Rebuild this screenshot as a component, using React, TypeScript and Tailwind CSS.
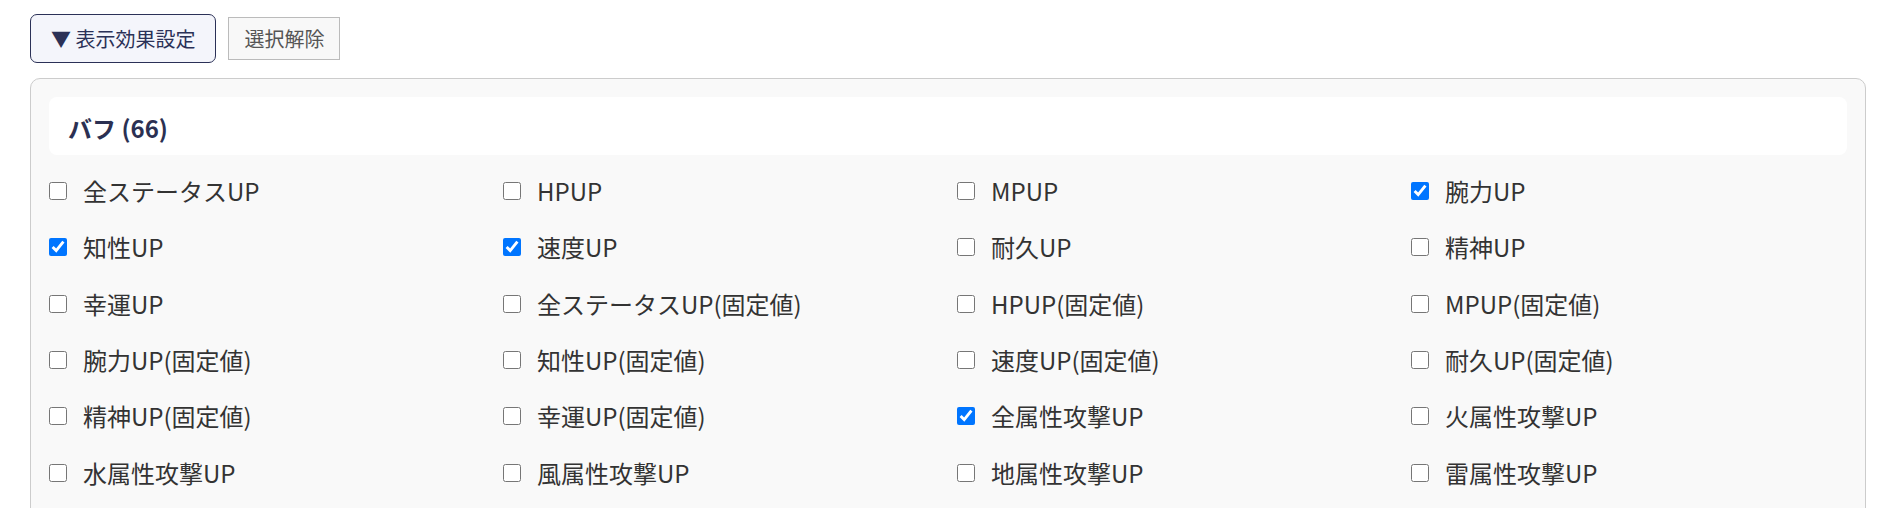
import { useState } from "react";

const buffs = [
  "全ステータスUP",
  "HPUP",
  "MPUP",
  "腕力UP",
  "知性UP",
  "速度UP",
  "耐久UP",
  "精神UP",
  "幸運UP",
  "全ステータスUP(固定値)",
  "HPUP(固定値)",
  "MPUP(固定値)",
  "腕力UP(固定値)",
  "知性UP(固定値)",
  "速度UP(固定値)",
  "耐久UP(固定値)",
  "精神UP(固定値)",
  "幸運UP(固定値)",
  "全属性攻撃UP",
  "火属性攻撃UP",
  "水属性攻撃UP",
  "風属性攻撃UP",
  "地属性攻撃UP",
  "雷属性攻撃UP",
  "光属性攻撃UP",
  "闇属性攻撃UP",
  "物理攻撃UP",
  "魔法攻撃UP",
];

function App() {
  const [checked, setChecked] = useState<string[]>([
    "腕力UP",
    "知性UP",
    "速度UP",
    "全属性攻撃UP",
  ]);

  const toggle = (name: string) => {
    setChecked((prev) =>
      prev.includes(name) ? prev.filter((n) => n !== name) : [...prev, name]
    );
  };

  return (
    <div
      className="bg-white px-[30px] pt-[14px] text-[#333]"
      style={{ fontFamily: '"Noto Sans CJK JP", "Noto Sans", sans-serif' }}
    >
      <div className="flex items-center gap-[12px]">
        <button className="rounded-[7px] border border-[#2b3157] bg-[#f4f5fb] px-[20px] py-[9px] text-[20px] leading-[29px] text-[#2b3157]">
          ▼ 表示効果設定
        </button>
        <button
          onClick={() => setChecked([])}
          className="border border-[#bbb] bg-[#f8f8f8] px-[15px] py-[6px] text-[20px] leading-[29px] text-[#555]"
        >
          選択解除
        </button>
      </div>

      <div className="mt-[15px] rounded-[10px] border border-[#ccc] bg-[#f9f9f9] p-[18px]">
        <div className="rounded-[8px] bg-white px-[19px] pb-[10px] pt-[14px] text-[24px] font-bold leading-[34px] text-[#2b3052]">
          バフ (66)
        </div>
        <div className="mt-[8px] grid grid-cols-4 gap-x-[18px]">
          {buffs.map((name) => (
            <label
              key={name}
              className="flex h-[56.3px] cursor-pointer items-center gap-[16px] text-[24px]"
            >
              <input
                type="checkbox"
                className="m-0 h-[18px] w-[18px] accent-[#0075ff]"
                checked={checked.includes(name)}
                onChange={() => toggle(name)}
              />
              <span>{name}</span>
            </label>
          ))}
        </div>
      </div>
    </div>
  );
}

export default App;
